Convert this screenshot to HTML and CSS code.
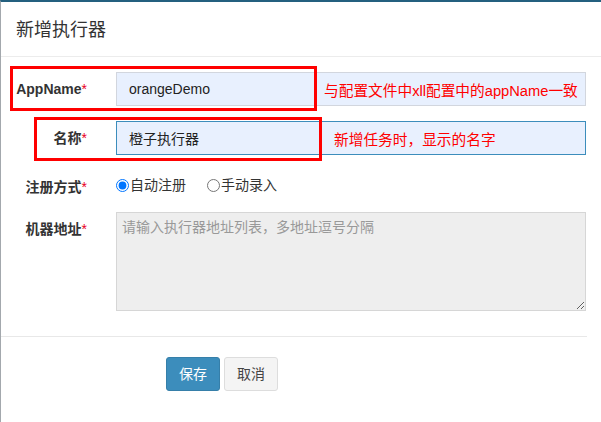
FILE: index.html
```html
<!DOCTYPE html>
<html lang="zh-CN">
<head>
<meta charset="utf-8">
<title>新增执行器</title>
<link rel="stylesheet" href="styles.css">
</head>
<body>
<div class="modal">
  <div class="modal-header">
    <h4 class="modal-title">新增执行器</h4>
  </div>
  <form class="modal-body">
    <div class="form-group row-app">
      <label class="control-label">AppName<span class="req">*</span></label>
      <div class="field">
        <input class="form-control" type="text" value="orangeDemo">
        <span class="note note-app">与配置文件中xll配置中的appName一致</span>
      </div>
      <div class="mark mark-app"></div>
    </div>
    <div class="form-group row-title">
      <label class="control-label">名称<span class="req">*</span></label>
      <div class="field">
        <input class="form-control focus" type="text" value="橙子执行器">
        <span class="note note-title">新增任务时，显示的名字</span>
      </div>
      <div class="mark mark-title"></div>
    </div>
    <div class="form-group row-radio">
      <label class="control-label">注册方式<span class="req">*</span></label>
      <div class="radios">
        <label class="radio-inline"><input type="radio" name="addressType" checked>自动注册</label>
        <label class="radio-inline"><input type="radio" name="addressType">手动录入</label>
      </div>
    </div>
    <div class="form-group row-area">
      <label class="control-label">机器地址<span class="req">*</span></label>
      <div class="field">
        <textarea class="form-control area" placeholder="请输入执行器地址列表，多地址逗号分隔" readonly></textarea>
      </div>
    </div>
  </form>
  <div class="modal-footer">
    <button type="button" class="btn btn-primary">保存</button>
    <button type="button" class="btn btn-default">取消</button>
  </div>
</div>
</body>
</html>
```

FILE: styles.css
```css
* { box-sizing: border-box; }

html, body {
  margin: 0;
  padding: 0;
  background: #fff;
}

body {
  font-family: "Liberation Sans", "Noto Sans CJK SC", sans-serif;
  font-size: 14px;
  color: #333;
  width: 601px;
  height: 422px;
  overflow: hidden;
}

.modal {
  height: 422px;
  border-top: 2px solid #24607f;
  border-left: 1px solid #a3a8ad;
  background: #fff;
}

.modal-header {
  height: 55px;
  border-bottom: 1px solid #ececec;
  display: flex;
  align-items: center;
  padding-left: 15px;
  padding-top: 2px;
}

.modal-title {
  margin: 0;
  font-size: 18px;
  font-weight: normal;
  line-height: 22px;
  color: #333;
}

.modal-body {
  display: flex;
  flex-direction: column;
  gap: 15px;
  padding: 15px 0 25px 0;
  margin: 0;
  width: 585px;
}

.form-group {
  display: flex;
  align-items: flex-start;
  position: relative;
}

.control-label {
  width: 86px;
  margin-right: 29px;
  text-align: right;
  font-weight: bold;
  line-height: 20px;
  padding-top: 7px;
  color: #333;
  flex: none;
}

.req {
  color: #e8001c;
  font-weight: normal;
}

.field {
  position: relative;
  width: 470px;
  flex: none;
}

.form-control {
  display: block;
  width: 100%;
  height: 34px;
  padding: 6px 12px;
  font-family: "Liberation Sans", "Noto Sans CJK SC", sans-serif;
  font-size: 14px;
  line-height: 20px;
  color: #222;
  background: #e8f0fe;
  border: 1px solid #d2d6de;
  border-radius: 0;
  outline: none;
  margin: 0;
}

.form-control.focus {
  border-color: #3c8dbc;
}

.area {
  height: 99px;
  padding: 4px 5px;
  background: #eeeeee;
  border-color: #d6d6d6;
  resize: vertical;
}

.area::placeholder {
  color: #999;
}

.note {
  position: absolute;
  top: 0;
  height: 34px;
  display: flex;
  align-items: center;
  color: #f00;
  font-size: 14.7px;
  white-space: nowrap;
}

.note-app { left: 208px; }
.note-title { left: 218px; }

.mark {
  position: absolute;
  border: 3px solid #f00;
  pointer-events: none;
}

.mark-app {
  left: 9px;
  top: -6px;
  width: 307px;
  height: 45px;
}

.mark-title {
  left: 33px;
  top: -4px;
  width: 288px;
  height: 44px;
}

.radios {
  display: flex;
  gap: 21px;
  padding-top: 3px;
  height: 27px;
}

.radio-inline {
  display: flex;
  align-items: center;
  line-height: 20px;
  color: #333;
}

.radio-inline input {
  margin: 0 1px 0 0;
  width: 13px;
  height: 13px;
}

.modal-footer {
  border-top: 1px solid #e8e8e8;
  width: 586px;
  padding: 20px 0 0 165px;
  display: flex;
  gap: 4px;
}

.btn {
  height: 34px;
  padding: 6px 12px;
  font-family: "Liberation Sans", "Noto Sans CJK SC", sans-serif;
  font-size: 14px;
  line-height: 20px;
  border-radius: 3px;
  border: 1px solid transparent;
  cursor: pointer;
}

.btn-primary {
  width: 54px;
  background: #3c8dbc;
  border-color: #367fa9;
  color: #fff;
}

.btn-default {
  width: 54px;
  background: #f4f4f4;
  border-color: #ddd;
  color: #444;
}
```
